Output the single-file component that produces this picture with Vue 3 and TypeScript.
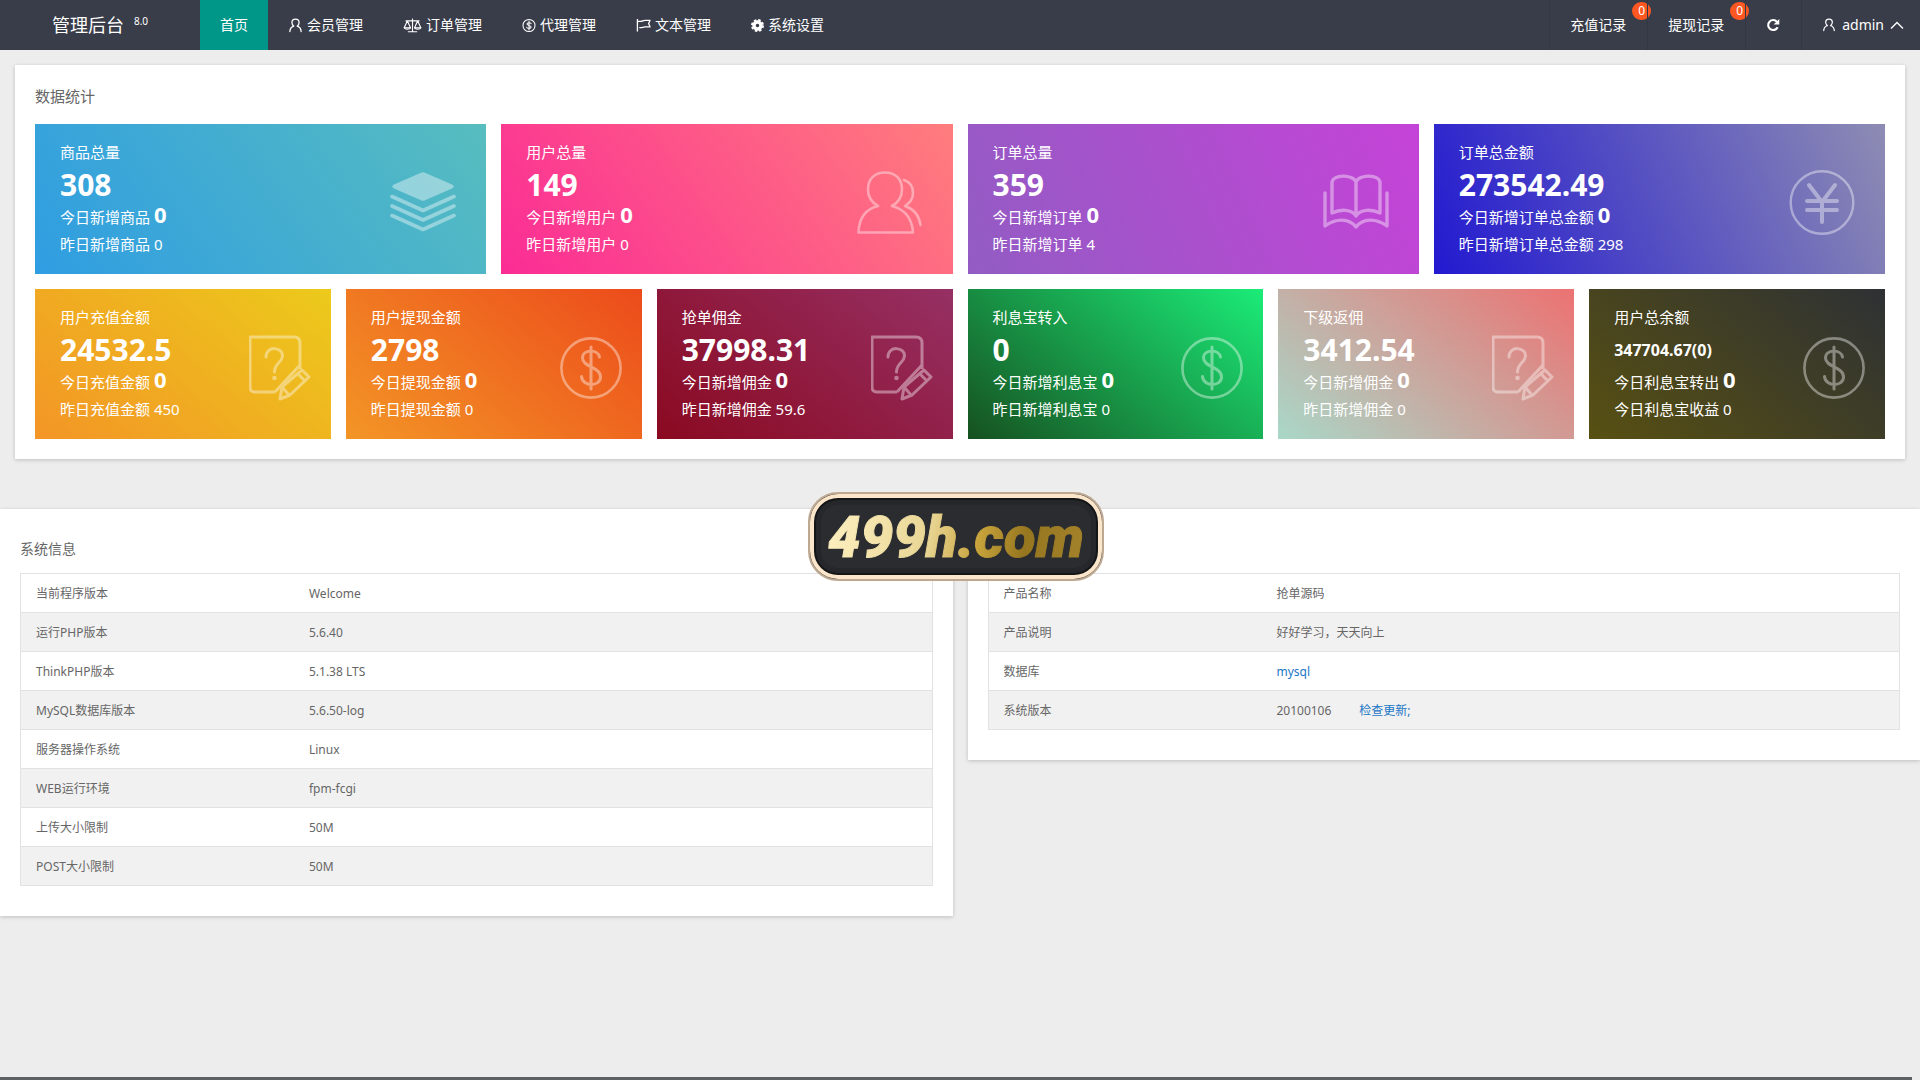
<script setup lang="ts">
interface NavItem {
  label: string
  icon?: string
  size?: number
}

interface StatCard {
  title: string
  value: string
  todayLabel: string
  today: string
  pastLabel: string
  past: string
  icon: string
  tone: string
  small?: boolean
}

interface InfoRow {
  label: string
  value: string
  link?: boolean
  action?: string
}

const navItems: NavItem[] = [
  { label: '首页' },
  { label: '会员管理', icon: 'user', size: 15 },
  { label: '订单管理', icon: 'scale', size: 19 },
  { label: '代理管理', icon: 'coin', size: 14 },
  { label: '文本管理', icon: 'flag', size: 15 },
  { label: '系统设置', icon: 'gear', size: 13 },
]

const records = [
  { label: '充值记录', count: 0 },
  { label: '提现记录', count: 0 },
]

const totals: StatCard[] = [
  { title: '商品总量', value: '308', todayLabel: '今日新增商品', today: '0', pastLabel: '昨日新增商品', past: '0', icon: 'layers', tone: 'blue' },
  { title: '用户总量', value: '149', todayLabel: '今日新增用户', today: '0', pastLabel: '昨日新增用户', past: '0', icon: 'users', tone: 'pink' },
  { title: '订单总量', value: '359', todayLabel: '今日新增订单', today: '0', pastLabel: '昨日新增订单', past: '4', icon: 'book', tone: 'purple' },
  { title: '订单总金额', value: '273542.49', todayLabel: '今日新增订单总金额', today: '0', pastLabel: '昨日新增订单总金额', past: '298', icon: 'yen', tone: 'indigo' },
]

const funds: StatCard[] = [
  { title: '用户充值金额', value: '24532.5', todayLabel: '今日充值金额', today: '0', pastLabel: '昨日充值金额', past: '450', icon: 'survey', tone: 'yellow' },
  { title: '用户提现金额', value: '2798', todayLabel: '今日提现金额', today: '0', pastLabel: '昨日提现金额', past: '0', icon: 'dollar', tone: 'orange' },
  { title: '抢单佣金', value: '37998.31', todayLabel: '今日新增佣金', today: '0', pastLabel: '昨日新增佣金', past: '59.6', icon: 'survey', tone: 'wine' },
  { title: '利息宝转入', value: '0', todayLabel: '今日新增利息宝', today: '0', pastLabel: '昨日新增利息宝', past: '0', icon: 'dollar', tone: 'green' },
  { title: '下级返佣', value: '3412.54', todayLabel: '今日新增佣金', today: '0', pastLabel: '昨日新增佣金', past: '0', icon: 'survey', tone: 'coral' },
  { title: '用户总余额', value: '347704.67(0)', todayLabel: '今日利息宝转出', today: '0', pastLabel: '今日利息宝收益', past: '0', icon: 'dollar', tone: 'olive', small: true },
]

const cardRows = [
  { name: 'totals', cards: totals },
  { name: 'funds', cards: funds },
]

const systemRows: InfoRow[] = [
  { label: '当前程序版本', value: 'Welcome' },
  { label: '运行PHP版本', value: '5.6.40' },
  { label: 'ThinkPHP版本', value: '5.1.38 LTS' },
  { label: 'MySQL数据库版本', value: '5.6.50-log' },
  { label: '服务器操作系统', value: 'Linux' },
  { label: 'WEB运行环境', value: 'fpm-fcgi' },
  { label: '上传大小限制', value: '50M' },
  { label: 'POST大小限制', value: '50M' },
]

const productRows: InfoRow[] = [
  { label: '产品名称', value: '抢单源码' },
  { label: '产品说明', value: '好好学习，天天向上' },
  { label: '数据库', value: 'mysql', link: true },
  { label: '系统版本', value: '20100106', action: '检查更新;' },
]
</script>

<template>
  <div class="page">
    <svg class="sprite" aria-hidden="true">
      <symbol id="i-user" viewBox="0 0 16 16">
        <g fill="none" stroke="currentColor" stroke-width="1.4" stroke-linecap="round">
          <path d="M6 8.6C4.700 7.600 4.200 6.200 4.200 4.900C4.200 2.700 5.800 1.300 8 1.300s3.800 1.400 3.800 3.600c0 1.300-.5 2.700-1.800 3.700" />
          <path d="M6 8.600C3.500 9.600 2.100 11.600 2 14.400M10 8.600c2.500 1 3.900 3 4 5.800" />
        </g>
      </symbol>
      <symbol id="i-scale" viewBox="0 0 20 16">
        <g fill="none" stroke="currentColor" stroke-width="1.200" stroke-linejoin="round" stroke-linecap="round">
          <path d="M10 1v13M5.500 14.700h9M3 3h14M4.500 3L1.200 10.500h6.600zM15.500 3l-3.300 7.500h6.600z" />
          <path d="M1.200 10.500c.8 2 5.800 2 6.600 0M12.200 10.500c.8 2 5.800 2 6.600 0" />
        </g>
      </symbol>
      <symbol id="i-coin" viewBox="0 0 16 16">
        <g fill="none" stroke="currentColor" stroke-width="1.200" stroke-linecap="round">
          <circle cx="8" cy="8" r="6.900" />
          <path d="M8 3v10M10.400 5.900C10 4.500 5.700 4.300 5.700 6.300c0 2 4.700 1.300 4.700 3.500 0 2.100-4.600 1.900-5 .3" />
        </g>
      </symbol>
      <symbol id="i-flag" viewBox="0 0 16 16">
        <path d="M1.500 1v13.500M1.500 3.500h3.500c2 0 2.500-1 4.500-1H15l-1.500 3.300L15 9.500H9.500c-2 0-2.500.8-4.500.8H3.500" fill="none" stroke="currentColor" stroke-width="1.400" stroke-linejoin="round" />
      </symbol>
      <symbol id="i-gear" viewBox="0 0 16 16">
        <circle cx="8" cy="8" r="4.300" fill="none" stroke="currentColor" stroke-width="4.200" />
        <circle cx="8" cy="8" r="6.600" fill="none" stroke="currentColor" stroke-width="2.800" stroke-dasharray="3 2.184" />
      </symbol>
      <symbol id="i-refresh" viewBox="0 0 16 16">
        <path d="M12.600 4.500A5.700 5.700 0 1 0 13.300 10.500" fill="none" stroke="currentColor" stroke-width="2.400" />
        <path d="M15.200 1v6.500H8.700z" fill="currentColor" />
      </symbol>
      <symbol id="i-chevron" viewBox="0 0 14 14">
        <path d="M1 10.500L7 4.500l6 6" fill="none" stroke="currentColor" stroke-width="1.400" />
      </symbol>
      <symbol id="i-layers" viewBox="0 0 66 66">
        <path d="M31 2.800q2-1 4 0L62 14.500q3.500 2 0 4L35 30.200q-2 1-4 0L4 18.500q-3.500-2 0-4z" fill="currentColor" />
        <path d="M2 26.500l31 14 31-14M2 36l31 14 31-14M2 45.500l31 14 31-14" fill="none" stroke="currentColor" stroke-width="3.600" stroke-linecap="round" stroke-linejoin="round" />
      </symbol>
      <symbol id="i-users" viewBox="0 0 66 66">
        <g fill="none" stroke="currentColor" stroke-width="2.600" stroke-linecap="round" stroke-linejoin="round">
          <path d="M21 36C14 32 11 26 11 19.500C11 8.500 18 2.500 28 2.500s17 6 17 17c0 6.500-3 12.500-10 16.500c12 3 20 12 21 26.500H1.500C2 48 9 39 21 36" />
          <path d="M47 10c6 2 9 7 9 13 0 6-3 10-8 13 9 3 14 9 15.500 19" />
        </g>
      </symbol>
      <symbol id="i-book" viewBox="0 0 66 66">
        <g fill="none" stroke="currentColor" stroke-width="3.400" stroke-linecap="round" stroke-linejoin="round">
          <path d="M33 12C30 4 9 4 9 13v30c8-4 20-4 24 3 4-7 16-7 24-3V13c0-9-21-9-24-1zV46" />
          <path d="M2 23v33c11-8 24-8 31 1 7-9 20-9 31-1V23" />
        </g>
      </symbol>
      <symbol id="i-yen" viewBox="0 0 66 66">
        <circle cx="33" cy="32.500" r="31.300" fill="none" stroke="currentColor" stroke-width="2.400" />
        <path d="M20 15l13 17 13-17M33 32v20M18 31h30M18 40h30" fill="none" stroke="currentColor" stroke-width="4" stroke-linecap="round" stroke-linejoin="round" />
      </symbol>
      <symbol id="i-dollar" viewBox="0 0 62 62">
        <circle cx="31" cy="31" r="29.600" fill="none" stroke="currentColor" stroke-width="2.600" />
        <path d="M31 10v42M39.500 20C38 12 22.500 12 22.500 21c0 9 18 9 18 19 0 10-18 10-19-.5" fill="none" stroke="currentColor" stroke-width="3" stroke-linecap="round" />
      </symbol>
      <symbol id="i-survey" viewBox="1 0 62 66">
        <g fill="none" stroke="currentColor" stroke-width="3" stroke-linejoin="round">
          <path d="M27 57H7q-5 0-5-5V2h44q6 0 6 6v22L27 57M52 30v4" />
          <path d="M32 64l2-12 20-17 7 7-19 18zM50 39l7 7M34 52l7 8" />
          <path d="M18 22c0-12 17-10 16.500-1C34 28 26.500 28 26.500 37" stroke-linecap="round" />
        </g>
        <circle cx="26.500" cy="43" r="2.300" fill="currentColor" />
      </symbol>
    </svg>

    <header class="topbar">
      <a class="brand" href="#">管理后台<sup>8.0</sup></a>
      <nav class="menu">
        <a v-for="(item, i) in navItems" :key="item.label" href="#" :class="{ active: i === 0 }">
          <svg v-if="item.icon" :width="item.size" height="15"><use :href="'#i-' + item.icon" /></svg>
          <span>{{ item.label }}</span>
        </a>
      </nav>
      <nav class="tools">
        <a v-for="rec in records" :key="rec.label" href="#">
          {{ rec.label }}<span class="badge">{{ rec.count }}</span>
        </a>
        <button type="button" aria-label="刷新"><svg width="14" height="14"><use href="#i-refresh" /></svg></button>
        <button type="button" class="account">
          <svg width="14" height="14"><use href="#i-user" /></svg>
          <span>admin</span>
          <svg width="14" height="14"><use href="#i-chevron" /></svg>
        </button>
      </nav>
    </header>

    <main>
      <section class="panel stats">
        <h2>数据统计</h2>
        <div v-for="row in cardRows" :key="row.name" class="cards" :class="row.name">
          <article v-for="card in row.cards" :key="card.title" class="card" :class="card.tone">
            <div>
              <p class="title">{{ card.title }}</p>
              <p class="value" :class="{ small: card.small }">{{ card.value }}</p>
              <p class="today">{{ card.todayLabel }} <strong>{{ card.today }}</strong></p>
              <p class="past">{{ card.pastLabel }} {{ card.past }}</p>
            </div>
            <svg class="glyph" aria-hidden="true"><use :href="'#i-' + card.icon" /></svg>
          </article>
        </div>
      </section>

      <div class="details">
        <section class="panel info">
          <h2>系统信息</h2>
          <table>
            <tbody>
              <tr v-for="row in systemRows" :key="row.label">
                <th scope="row">{{ row.label }}</th>
                <td>{{ row.value }}</td>
              </tr>
            </tbody>
          </table>
        </section>
        <section class="panel info untitled">
          <table>
            <tbody>
              <tr v-for="row in productRows" :key="row.label">
                <th scope="row">{{ row.label }}</th>
                <td>
                  <a v-if="row.link" href="#">{{ row.value }}</a>
                  <template v-else>{{ row.value }}</template>
                  <a v-if="row.action" class="action" href="#">{{ row.action }}</a>
                </td>
              </tr>
            </tbody>
          </table>
        </section>
        <div class="plate"><span>499h.com</span></div>
      </div>
    </main>
    <footer class="edge"></footer>
  </div>
</template>

<style>
body {
  background: #ededed;
}
</style>

<style scoped>
.page {
  display: flex;
  flex-direction: column;
  min-height: 100vh;
  font: 14px/24px "Noto Sans", "Noto Sans CJK SC", sans-serif;
  color: #666;
}

.page * {
  box-sizing: border-box;
}

.sprite {
  position: absolute;
  width: 0;
  height: 0;
}

a {
  color: #1a76c6;
  text-decoration: none;
}

h2,
p {
  margin: 0;
  font-weight: 400;
}

.topbar {
  display: flex;
  height: 50px;
  background: #393d49;
  color: #fff;
}

.topbar a,
.topbar button {
  display: flex;
  align-items: center;
  color: #fff;
}

.topbar svg {
  flex: none;
}

.brand {
  justify-content: center;
  width: 200px;
  font-size: 18px;
}

.brand sup {
  margin-left: 10px;
  padding-bottom: 8px;
  font-size: 10px;
  line-height: 12px;
}

.menu {
  display: flex;
}

.menu a {
  gap: 4px;
  padding: 0 20px;
}

.menu a.active {
  background: #009688;
}

.tools {
  display: flex;
  margin-left: auto;
}

.tools a,
.tools button {
  position: relative;
  padding: 0 21px 0 20px;
  border: 0;
  border-left: 1px solid #333742;
  background: none;
  font: inherit;
}

.badge {
  position: absolute;
  top: 2px;
  right: -4px;
  width: 19px;
  height: 18px;
  border-radius: 9px;
  background: #ff5722;
  font-size: 12px;
  line-height: 18px;
  text-align: center;
}

.tools .account {
  gap: 6px;
  padding-right: 16px;
}

.panel {
  background: #fff;
  box-shadow: 0 1px 4px rgba(0, 0, 0, 0.2);
}

.stats {
  display: flex;
  flex-direction: column;
  gap: 15px;
  margin: 15px 15px 50px;
  padding: 20px;
}

.stats h2 {
  padding-bottom: 2px;
  font-size: 15px;
  line-height: 22px;
}

.cards {
  display: grid;
  gap: 15px;
}

.cards.totals {
  grid-template-columns: repeat(4, 1fr);
}

.cards.funds {
  grid-template-columns: repeat(6, 1fr);
}

.card {
  display: flex;
  justify-content: space-between;
  height: 150px;
  padding: 14px 30px 0 25px;
  color: #fff;
  font-size: 15px;
  white-space: nowrap;
}

.funds .card {
  padding-right: 20px;
}

.title {
  line-height: 28px;
}

.value {
  font-size: 30px;
  font-weight: 700;
  line-height: 38px;
}

.value.small {
  font-size: 16px;
}

.today {
  line-height: 20px;
}

.today strong {
  font-size: 22px;
}

.past {
  line-height: 34px;
}

.glyph {
  flex: none;
  width: 66px;
  height: 66px;
  margin-top: 32px;
  opacity: 0.4;
}

.funds .glyph {
  width: 62px;
}

.blue { background: linear-gradient(-125deg, #57bdbf, #2f9de2); }
.pink { background: linear-gradient(-125deg, #ff7d7d, #fb2c95); }
.purple { background: linear-gradient(-113deg, #c543d8, #925cc3); }
.indigo { background: linear-gradient(-113deg, #8e8cb3, #2219d0); }
.yellow { background: linear-gradient(-141deg, #ecca1b, #f39526); }
.orange { background: linear-gradient(-141deg, #ec4b1b, #f39526); }
.wine { background: linear-gradient(-141deg, #963064, #8a0920); }
.green { background: linear-gradient(-141deg, #1bec78, #165120); }
.coral { background: linear-gradient(-141deg, #ec7272, #a9d8c8); }
.olive { background: linear-gradient(-141deg, #2e3134, #585012); }

.details {
  position: relative;
  display: grid;
  grid-template-columns: 1fr 1fr;
  align-items: start;
  gap: 15px;
}

.info {
  padding: 28px 20px 30px;
}

.info.untitled {
  padding-top: 64px;
}

.info h2 {
  margin-bottom: 12px;
  font-size: 14px;
  line-height: 24px;
}

table {
  width: 100%;
  border-collapse: collapse;
  table-layout: fixed;
  border: 1px solid #e2e2e2;
  font-size: 12px;
}

tr {
  height: 39px;
  border-bottom: 1px solid #e2e2e2;
}

tr:nth-child(even) {
  background: #f1f1f1;
}

th,
td {
  padding: 2px 15px 0;
  font-weight: 400;
  line-height: 20px;
  text-align: left;
}

th {
  width: 30%;
}

.action {
  margin-left: 28px;
}

.plate {
  position: absolute;
  top: -17px;
  left: 50%;
  display: flex;
  align-items: center;
  justify-content: center;
  width: 296px;
  height: 89px;
  margin-left: -152px;
  border: 2px solid #bda892;
  border-radius: 30px;
  background: #2a2c2f;
  box-shadow: inset 0 0 0 4px #fbe6cc, inset 0 0 0 6px #151618, inset 0 0 0 11px #25272a;
}

.plate span {
  padding: 0 6px;
  background: linear-gradient(100deg, #fff2c4, #e9d695 40%, #c9a43c 58%, #96761f 75%, #a5842c);
  background-clip: text;
  color: transparent;
  font: italic 900 58px/76px Roboto, "Liberation Sans", sans-serif;
  -webkit-text-stroke: 1px transparent;
}

.edge {
  height: 3px;
  margin-top: auto;
  margin-right: 8px;
  background: #5f6062;
}
</style>
